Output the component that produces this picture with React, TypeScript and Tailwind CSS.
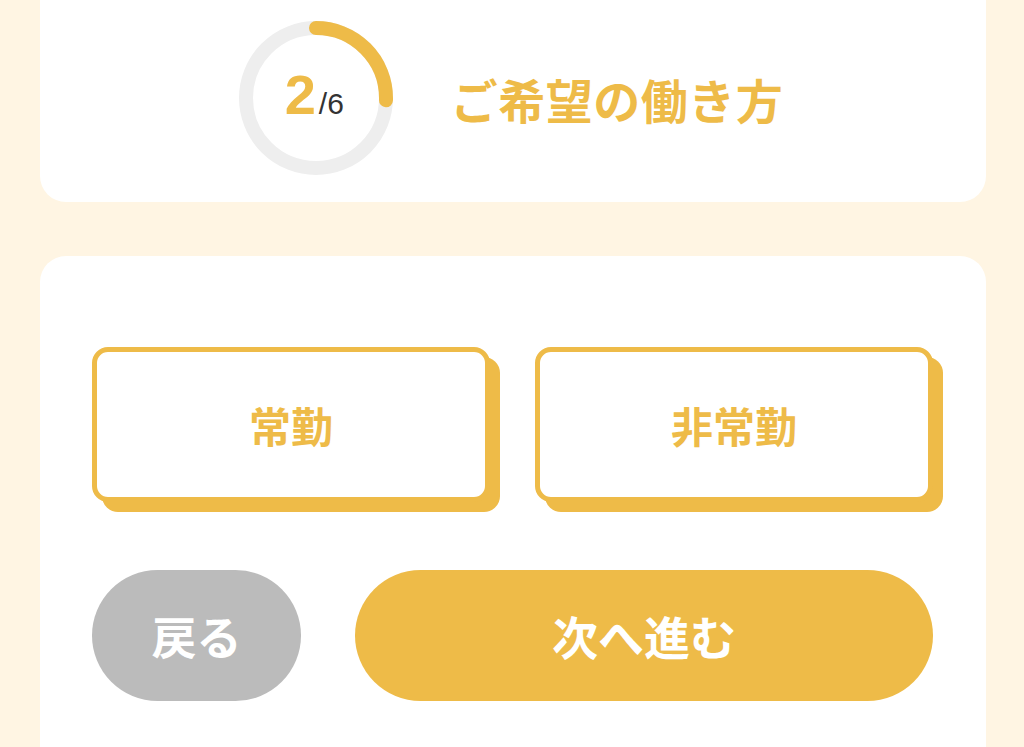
import React from 'react'

const ORANGE = '#eebb48'

function ProgressRing({ step, total }: { step: number; total: number }) {
  const r = 70
  const c = 2 * Math.PI * r
  const arc = c * 0.255
  return (
    <div className="relative w-[158px] h-[158px] shrink-0">
      <svg width="158" height="158" viewBox="0 0 158 158" className="absolute inset-0">
        <circle cx="79" cy="79" r={r} fill="none" stroke="#eeeeee" strokeWidth="14" />
        <circle
          cx="79"
          cy="79"
          r={r}
          fill="none"
          stroke={ORANGE}
          strokeWidth="14"
          strokeLinecap="round"
          strokeDasharray={`${arc} ${c}`}
          transform="rotate(-90 79 79)"
        />
      </svg>
      <div className="absolute inset-0 flex items-baseline justify-center pt-[48px] pr-[3px] font-['Liberation_Sans',Arial,sans-serif]">
        <span className="text-[56px] leading-none font-bold text-[#eebb48]">{step}</span>
        <span className="text-[30px] leading-none text-[#333333] ml-[3px]">/{total}</span>
      </div>
    </div>
  )
}

function Option({ label }: { label: string }) {
  return (
    <button className="h-[155px] rounded-[16px] border-[5px] border-[#eebb48] bg-white shadow-[10px_10px_0_#eebb48] flex items-center justify-center text-[42px] font-bold text-[#eebb48]">
      {label}
    </button>
  )
}

export default function App() {
  return (
    <div className="min-h-[747px] bg-[#fff5e3] pl-[40px] pr-[38px] flex flex-col gap-[54px] overflow-hidden font-['Noto_Sans_CJK_JP',sans-serif]">
      <div className="bg-white rounded-b-[26px] pt-[19px] pb-[25px] flex items-center justify-center gap-[56px] pr-[6px]">
        <ProgressRing step={2} total={6} />
        <h1 className="text-[47px] font-bold text-[#eebb48] leading-none tracking-[0.5px]">ご希望の働き方</h1>
      </div>

      <div className="bg-white rounded-t-[26px] pl-[52px] pr-[53px] pt-[91px] pb-[60px] flex-1">
        <div className="grid grid-cols-2 gap-[45px]">
          <Option label="常勤" />
          <Option label="非常勤" />
        </div>
        <div className="flex gap-[54px] mt-[68px]">
          <button className="w-[209px] h-[131px] rounded-full bg-[#bbbbbb] text-white text-[45px] font-bold">
            戻る
          </button>
          <button className="flex-1 h-[131px] rounded-full bg-[#eebb48] text-white text-[46px] font-bold">
            次へ進む
          </button>
        </div>
      </div>
    </div>
  )
}
